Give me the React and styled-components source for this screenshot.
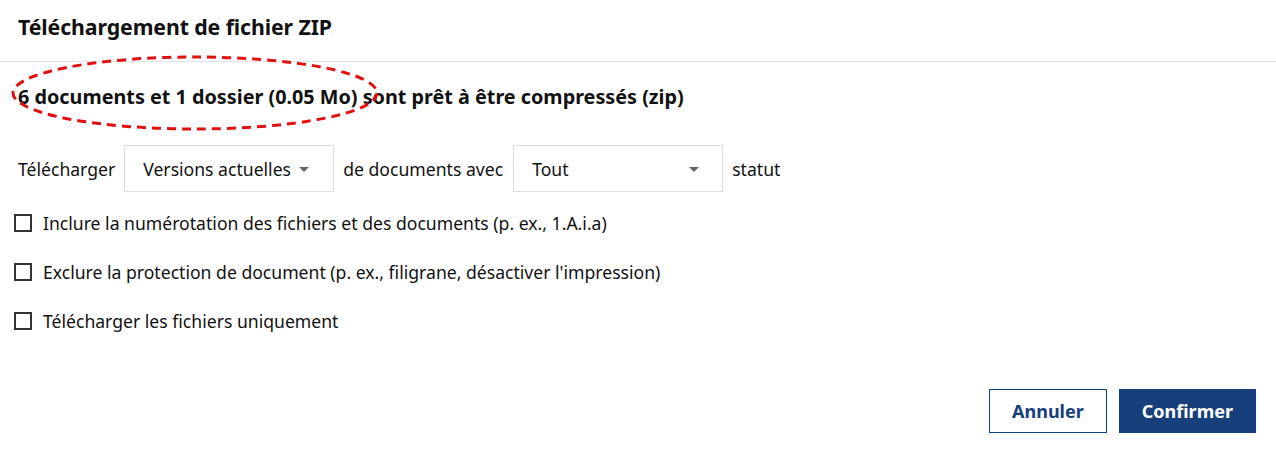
import React from "react";
import styled, { createGlobalStyle } from "styled-components";

const NAVY = "#173f7b";

const GlobalStyle = createGlobalStyle`
  body {
    margin: 0;
    background: #ffffff;
    font-family: "Noto Sans", "Open Sans", sans-serif;
    color: #111111;
  }
`;

const Dialog = styled.div`
  width: 1276px;
  height: 450px;
  display: flex;
  flex-direction: column;
`;

const Header = styled.div`
  height: 62px;
  padding: 0 18px;
  display: flex;
  align-items: center;
  border-bottom: 1px solid #e2e2e2;
  box-sizing: border-box;
`;

const Title = styled.h1`
  margin: -8px 0 0;
  font-size: 21.3px;
  font-weight: 700;
  letter-spacing: -0.1px;
`;

const Body = styled.div`
  padding: 0 18px;
  display: flex;
  flex-direction: column;
  flex: 1;
`;

const Summary = styled.div`
  position: relative;
  margin-top: 22px;
  font-size: 19.8px;
  font-weight: 700;
  line-height: 26px;
`;

const Highlight = styled.svg`
  position: absolute;
  left: -8px;
  top: -30px;
  pointer-events: none;
`;

const OptionsRow = styled.div`
  display: flex;
  align-items: center;
  margin-top: 35px;
  font-size: 17.6px;
  white-space: nowrap;
`;

const Select = styled.div`
  width: 210px;
  height: 47px;
  flex-shrink: 0;
  box-sizing: border-box;
  border: 1px solid #dddddd;
  display: flex;
  align-items: center;
  justify-content: ${(p) => (p.spread ? "space-between" : "flex-start")};
  gap: 8px;
  padding: 0 ${(p) => (p.spread ? 23 : 14)}px 0 18px;
  margin: 0 9px 0 ${(p) => (p.spread ? 10 : 9)}px;
`;

const Caret = styled.span`
  width: 0;
  height: 0;
  flex-shrink: 0;
  border-left: 5px solid transparent;
  border-right: 5px solid transparent;
  border-top: 5px solid #666666;
  margin-top: 2px;
`;

const Checks = styled.div`
  display: flex;
  flex-direction: column;
  gap: 27px;
  margin-top: 20px;
`;

const CheckRow = styled.label`
  display: flex;
  align-items: center;
  gap: 11px;
  margin-left: -4px;
  font-size: 17.6px;
  line-height: 22px;
`;

const Box = styled.span`
  width: 14px;
  height: 14px;
  border: 2px solid #333333;
  flex-shrink: 0;
`;

const Footer = styled.div`
  display: flex;
  justify-content: flex-end;
  gap: 12px;
  padding: 0 20px 17px 0;
  margin-top: auto;
`;

const Button = styled.button`
  height: 44px;
  padding: 0 22px;
  box-sizing: border-box;
  font-family: inherit;
  font-size: 18px;
  font-weight: 700;
  border: 1px solid ${NAVY};
  background: ${(p) => (p.primary ? NAVY : "#ffffff")};
  color: ${(p) => (p.primary ? "#ffffff" : NAVY)};
`;

const options = [
  "Inclure la numérotation des fichiers et des documents (p. ex., 1.A.i.a)",
  "Exclure la protection de document (p. ex., filigrane, désactiver l'impression)",
  "Télécharger les fichiers uniquement",
];

export default function App() {
  return (
    <>
      <GlobalStyle />
      <Dialog>
        <Header>
          <Title>Téléchargement de fichier ZIP</Title>
        </Header>
        <Body>
          <Summary>
            6 documents et 1 dossier (0.05 Mo) sont prêt à être compressés (zip)
            <Highlight width="372" height="80" viewBox="0 0 372 80">
              <ellipse
                cx="185"
                cy="39"
                rx="182"
                ry="36"
                fill="none"
                stroke="#e01010"
                strokeWidth="3"
                strokeDasharray="9 6"
              />
            </Highlight>
          </Summary>
          <OptionsRow>
            Télécharger
            <Select>
              Versions actuelles
              <Caret />
            </Select>
            de documents avec
            <Select spread>
              Tout
              <Caret />
            </Select>
            statut
          </OptionsRow>
          <Checks>
            {options.map((o) => (
              <CheckRow key={o}>
                <Box />
                {o}
              </CheckRow>
            ))}
          </Checks>
        </Body>
        <Footer>
          <Button>Annuler</Button>
          <Button primary>Confirmer</Button>
        </Footer>
      </Dialog>
    </>
  );
}
